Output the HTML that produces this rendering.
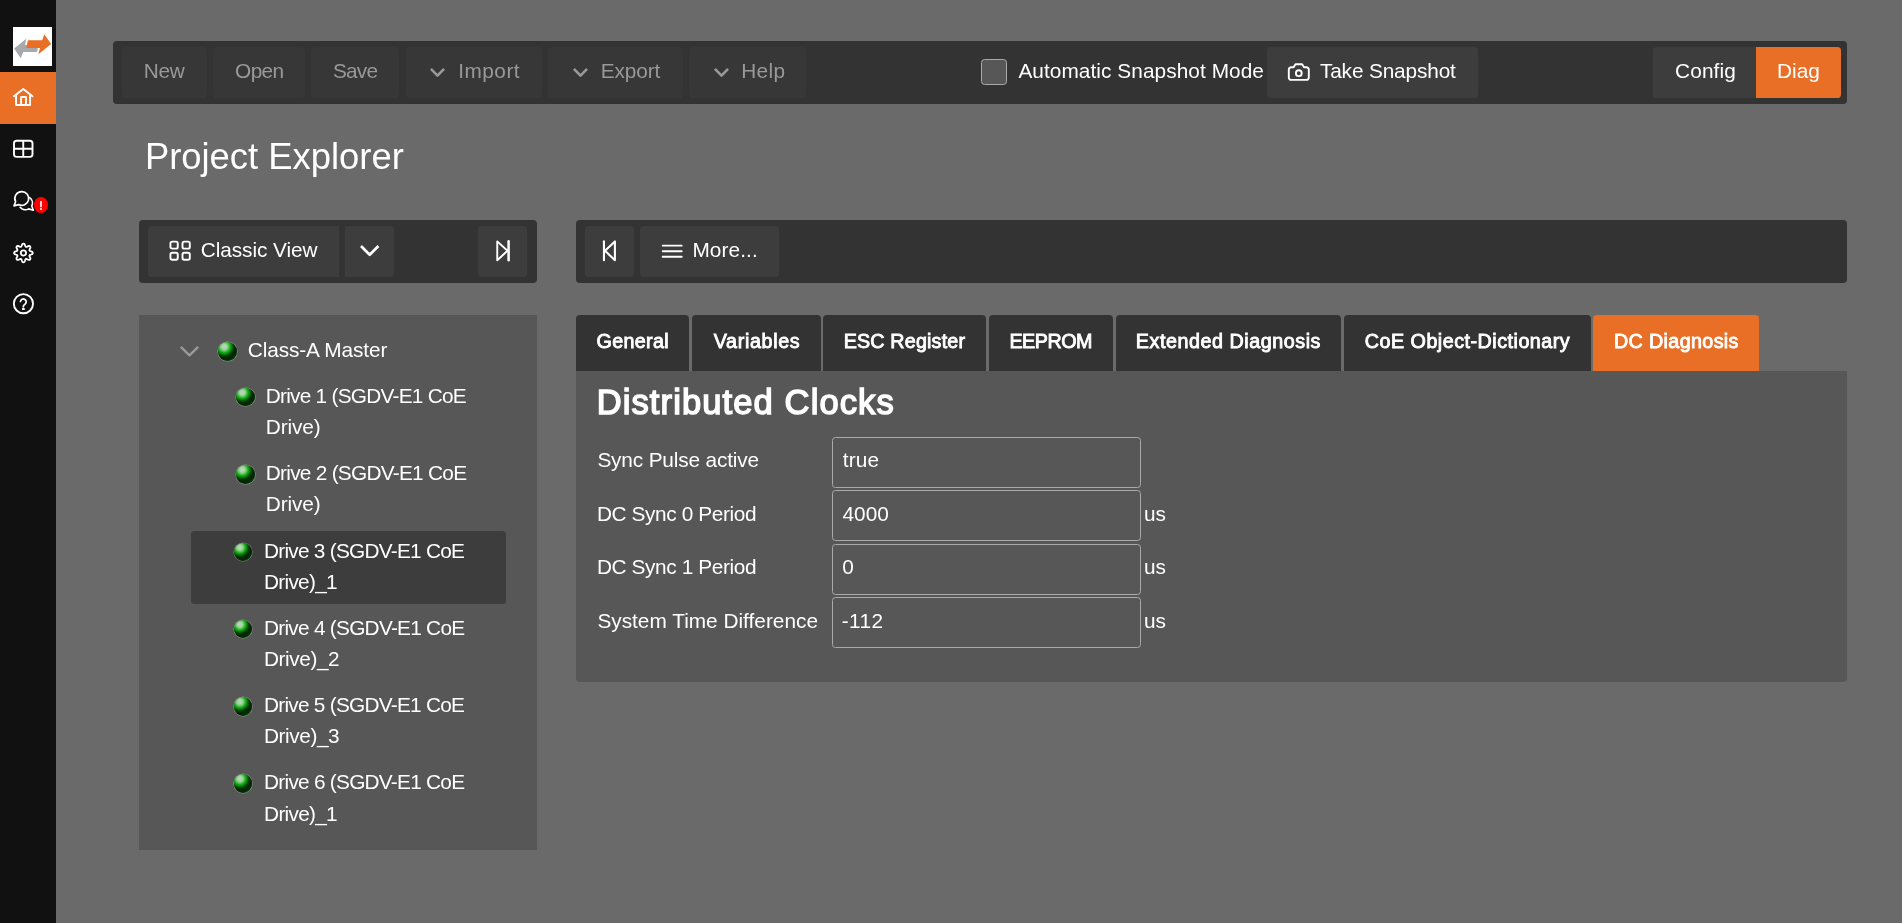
<!DOCTYPE html>
<html lang="en">
<head>
<meta charset="utf-8">
<title>Project Explorer</title>
<style>
*{box-sizing:border-box;margin:0;padding:0}
html,body{width:1902px;height:923px;overflow:hidden}
body{background:#6a6a6a;color:#fff;font-family:"Liberation Sans",sans-serif;font-size:20.8px;position:relative}
ul{list-style:none}
button{border:0;font:inherit;color:inherit;display:block;text-align:left;overflow:visible}
#app{position:absolute;left:0;top:0;width:1902px;height:923px;will-change:transform}
#side{position:absolute;left:0;top:0;width:56px;height:923px;background:#111}
#logo{position:absolute;left:13px;top:26.9px;width:39.2px;height:39.2px;background:#fff;display:block}
#logo svg{display:block}
.navi{position:absolute;left:0;width:56px;height:52px}
.navi.on{background:#e96f26}
#badge{position:absolute;width:14.3px;height:16.2px;border-radius:50%;background:#f00;color:#fff;font-size:12px;font-weight:700;line-height:18.4px;text-align:center}
.ico{position:absolute;overflow:visible}
.bar{position:absolute;background:#333;border-radius:3.8px}
#topbar{left:113px;top:41px;width:1734px;height:62.8px}
.btn{position:absolute;background:#3d3d3d;border-radius:3.6px}
.btn.dis{background:#373737}
.btn.on{background:#e96f26}
#chk{position:absolute;width:26px;height:26px;border:1px solid #aaa;border-radius:3.5px;background:#575757}
.t{position:absolute;white-space:pre;line-height:1;font-weight:400;font-style:normal}
#tree{position:absolute;left:139px;top:315px;width:398px;height:535px;background:#575757}
#sel{position:absolute;width:315.2px;height:73px;background:#3d3d3d;border-radius:3.5px}
.ball{position:absolute;width:18.5px;height:18.5px;border-radius:50%;background:radial-gradient(circle at 33% 25%,#b6dbb6 0%,#a6d5a6 13%,#62c262 23%,#18b018 30%,#0f940f 36%,#076607 43%,#033603 51%,#022702 59%,#022a02 70%,#064806 82%,#0a5a0a 100%);box-shadow:0 0 0 .55px rgba(215,232,215,.42)}
.tab{position:absolute;top:315px;height:56px;background:#333;border-radius:4px 4px 0 0}
.tab.on{background:#e96f26}
#panel{position:absolute;left:576px;top:370.6px;width:1271px;height:311.2px;background:#575757;border-radius:0 0 4px 4px}
.inp{position:absolute;left:256px;width:309px;height:51px;border:1px solid #aaa;border-radius:3.5px;display:block}
</style>
</head>
<body>
<div id="app">
<nav id="side" aria-label="Main navigation">
<a id="logo" aria-label="Home"><svg width="39.2" height="39.2" viewBox="0 0 39 39" aria-hidden="true"><path d="M1.1 21.5L13.2 11.6L12 18H25.5L23.9 24.8H10.2L7.7 31.2Z" fill="#a7a9ac"/><path d="M38 16.8L31.1 7.1L29.1 13.3H14.9L13.1 20.9L26.9 21L25.2 27Z" fill="#e96f26"/></svg></a>
<ul>
<li class="navi on" style="top:72px"><svg class="ico" style="left:12px;top:14px" width="23" height="22" viewBox="0 0 23 22" aria-hidden="true"><g fill="none" stroke="#fff" stroke-width="1.9" stroke-linejoin="round" stroke-linecap="round"><path d="M2 10.3L11.26 2.9L20.5 10.3"/><path d="M4.05 8.9V19H18.1V8.9"/><path d="M9.1 19V11H13.95V19"/></g></svg></li>
<li class="navi" style="top:124px"><svg class="ico" style="left:12px;top:14.3px" width="23" height="22" viewBox="0 0 23 22" aria-hidden="true"><g fill="none" stroke="#fff" stroke-width="1.9"><rect x="2" y="2.7" width="18.5" height="16.2" rx="2.6"/><path d="M2 10.8H20.5M11.25 2.7V18.9"/></g></svg></li>
<li class="navi" style="top:176px"><svg class="ico" style="left:12px;top:13px" width="24" height="24" viewBox="0 0 24 24" aria-hidden="true"><g fill="none" stroke="#fff" stroke-width="1.65" stroke-linejoin="round" stroke-linecap="round"><path d="M9.8 2.6a6.9 6.9 0 1 1 -3.2 13l-4.6 1.3 1.6 -4.2A6.9 6.9 0 0 1 9.8 2.6Z"/><path d="M17.6 8.6a6.600 6.600 0 0 1 2.2 8.3l1.5 4.3-4.600-1.3a6.900 6.900 0 0 1-8.600-1.600"/></g></svg><b id="badge" style="left:33.9px;top:20.9px">!</b></li>
<li class="navi" style="top:228px"><svg class="ico" style="left:12px;top:13px" width="24" height="24" viewBox="0 0 24 24" aria-hidden="true"><g fill="none" stroke="#fff" stroke-width="1.8" stroke-linejoin="round"><path d="M11.43 2.60L12.03 2.75L12.58 3.20L12.98 4.15L13.26 5.12L13.58 5.62L13.94 5.90L14.39 5.96L14.97 5.83L15.85 5.34L16.80 4.95L17.51 5.02L18.04 5.34L18.36 5.87L18.43 6.58L18.04 7.53L17.55 8.41L17.42 8.99L17.48 9.44L17.76 9.80L18.26 10.12L19.23 10.40L20.18 10.80L20.63 11.35L20.78 11.95L20.63 12.55L20.18 13.10L19.23 13.50L18.26 13.78L17.76 14.10L17.48 14.46L17.42 14.91L17.55 15.49L18.04 16.37L18.43 17.32L18.36 18.03L18.04 18.56L17.51 18.88L16.80 18.95L15.85 18.56L14.97 18.07L14.39 17.94L13.94 18.00L13.58 18.28L13.26 18.78L12.98 19.75L12.58 20.70L12.03 21.15L11.43 21.30L10.83 21.15L10.28 20.70L9.88 19.75L9.60 18.78L9.28 18.28L8.92 18.00L8.47 17.94L7.89 18.07L7.01 18.56L6.06 18.95L5.35 18.88L4.82 18.56L4.50 18.03L4.43 17.32L4.82 16.37L5.31 15.49L5.44 14.91L5.38 14.46L5.10 14.10L4.60 13.78L3.63 13.50L2.68 13.10L2.23 12.55L2.08 11.95L2.23 11.35L2.68 10.80L3.63 10.40L4.60 10.12L5.10 9.80L5.38 9.44L5.44 8.99L5.31 8.41L4.82 7.53L4.43 6.58L4.50 5.87L4.82 5.34L5.35 5.02L6.06 4.95L7.01 5.34L7.89 5.83L8.47 5.96L8.92 5.90L9.28 5.62L9.60 5.12L9.88 4.15L10.28 3.20L10.83 2.75Z"/><circle cx="11.43" cy="11.95" r="2.65"/></g></svg></li>
<li class="navi" style="top:280px"><svg class="ico" style="left:12px;top:12px" width="24" height="24" viewBox="0 0 24 24" aria-hidden="true"><g fill="none" stroke="#fff" stroke-linecap="round"><circle cx="11.43" cy="11.7" r="9.6" stroke-width="1.9"/><path d="M8.45 9.5A2.9 2.9 0 1 1 12.9 12.3C12 12.9 11.35 13.3 11.35 14.3V14.8" stroke-width="1.75"/></g><rect x="9.95" y="16.1" width="2.9" height="1.9" rx=".6" fill="#fff"/></svg></li>
</ul>
</nav>
<header class="bar" id="topbar">
<button type="button" class="btn dis" disabled style="left:8.8px;top:5.8px;width:85.2px;height:51.3px"><span class="t" style="left:22px;top:14.2px;color:#999;letter-spacing:-0.29px">New</span></button>
<button type="button" class="btn dis" disabled style="left:99.8px;top:5.8px;width:92.2px;height:51.3px"><span class="t" style="left:22.3px;top:14.2px;color:#999;letter-spacing:-0.63px">Open</span></button>
<button type="button" class="btn dis" disabled style="left:197.8px;top:5.8px;width:88px;height:51.3px"><span class="t" style="left:22.13px;top:14.2px;color:#999;letter-spacing:-0.79px">Save</span></button>
<button type="button" class="btn dis" disabled style="left:292.8px;top:5.8px;width:136.2px;height:51.3px"><svg class="ico" style="left:24.2px;top:20.9px" width="15" height="9.3" viewBox="0 0 15 9.3" aria-hidden="true"><path d="M0.93 0.9L7.5 7.69L14.07 0.9" fill="none" stroke="#999" stroke-width="2.6" stroke-linejoin="round"/></svg><span class="t" style="left:52.55px;top:14.2px;color:#999;letter-spacing:0.45px">Import</span></button>
<button type="button" class="btn dis" disabled style="left:435px;top:5.8px;width:135px;height:51.3px"><svg class="ico" style="left:24.5px;top:20.9px" width="15" height="9.3" viewBox="0 0 15 9.3" aria-hidden="true"><path d="M0.93 0.9L7.5 7.69L14.07 0.9" fill="none" stroke="#999" stroke-width="2.6" stroke-linejoin="round"/></svg><span class="t" style="left:52.85px;top:14.2px;color:#999;letter-spacing:-0.12px">Export</span></button>
<button type="button" class="btn dis" disabled style="left:575.8px;top:5.8px;width:117.4px;height:51.3px"><svg class="ico" style="left:25px;top:20.9px" width="15" height="9.3" viewBox="0 0 15 9.3" aria-hidden="true"><path d="M0.93 0.9L7.5 7.69L14.07 0.9" fill="none" stroke="#999" stroke-width="2.6" stroke-linejoin="round"/></svg><span class="t" style="left:52.35px;top:14.2px;color:#999;letter-spacing:0.35px">Help</span></button>
<label id="auto"><span id="chk" role="checkbox" aria-checked="false" style="left:868px;top:18px"></span><span class="t" style="left:905.42px;top:20px;letter-spacing:0.07px">Automatic Snapshot Mode</span></label>
<button type="button" class="btn" style="left:1154px;top:5.8px;width:211px;height:51.3px"><svg class="ico" style="left:19px;top:15.2px" width="26" height="21" viewBox="0 0 26 21" aria-hidden="true"><g fill="none" stroke="#fff" stroke-width="1.9" stroke-linejoin="round"><path d="M2.8 7.6a2.3 2.3 0 0 1 2.3-2.3h2.5l1.9-3h6.6l1.9 3h2.5a2.3 2.3 0 0 1 2.3 2.3v8a2.3 2.3 0 0 1-2.3 2.3H5.1a2.3 2.3 0 0 1-2.3-2.3Z"/><circle cx="12.8" cy="11.2" r="2.9"/></g></svg><span class="t" style="left:52.95px;top:14.2px;letter-spacing:-0.14px">Take Snapshot</span></button>
<button type="button" class="btn" style="left:1540px;top:5.8px;width:102.8px;height:51.3px;border-radius:3.6px 0 0 3.6px"><span class="t" style="left:22.1px;top:14.2px;letter-spacing:0.11px">Config</span></button>
<button type="button" class="btn on" style="left:1642.8px;top:5.8px;width:85.4px;height:51.3px;border-radius:0 3.6px 3.6px 0"><span class="t" style="left:21.15px;top:14.2px;letter-spacing:0.05px">Diag</span></button>
</header>
<h1 class="t" style="left:144.9px;top:139px;font-size:36.4px">Project Explorer</h1>
<div class="bar" role="toolbar" style="left:139.2px;top:220px;width:397.8px;height:62.8px">
<button type="button" class="btn" style="left:8.6px;top:6.2px;width:191.4px;height:50.8px;border-radius:3.6px 0 0 3.6px"><svg class="ico" style="left:20.2px;top:12.8px" width="24" height="23" viewBox="0 0 24 23" aria-hidden="true"><g fill="none" stroke="#fff" stroke-width="1.9"><rect x="2.45" y="2.65" width="7.3" height="7" rx="1.7"/><rect x="14.5" y="2.65" width="7.3" height="7" rx="1.7"/><rect x="2.45" y="13.75" width="7.3" height="7" rx="1.7"/><rect x="14.5" y="13.75" width="7.3" height="7" rx="1.7"/></g></svg><span class="t" style="left:53px;top:13.8px;letter-spacing:-0.07px">Classic View</span></button>
<button type="button" class="btn" aria-label="View options" style="left:205.8px;top:6.2px;width:48.8px;height:50.8px;border-radius:0 3.6px 3.6px 0"><svg class="ico" style="left:14.8px;top:19.1px" width="19.4" height="11.4" viewBox="0 0 19.4 11.4" aria-hidden="true"><path d="M0.96 0.95L9.7 9.73L18.44 0.95" fill="none" stroke="#fff" stroke-width="2.7" stroke-linejoin="round"/></svg></button>
<button type="button" class="btn" aria-label="Collapse" style="left:338.4px;top:6.2px;width:49.6px;height:50.8px"><svg class="ico" style="left:16.4px;top:12.8px" width="18" height="24" viewBox="0 0 18 24" aria-hidden="true"><g fill="none" stroke="#fff" stroke-width="1.9" stroke-linejoin="round" stroke-linecap="round"><path d="M3.25 2.4V21.2L13.5 11.8Z"/><path d="M14.6 2.2V21.2" stroke-width="2.5"/></g></svg></button>
</div>
<div class="bar" role="toolbar" style="left:576px;top:220px;width:1271px;height:62.8px">
<button type="button" class="btn" aria-label="Expand" style="left:8.7px;top:6.2px;width:49.4px;height:50.8px"><svg class="ico" style="left:15.9px;top:12.8px" width="18" height="24" viewBox="0 0 18 24" aria-hidden="true"><g fill="none" stroke="#fff" stroke-linejoin="round" stroke-linecap="round"><path d="M13.9 2.4V21.2L4 11.8Z" stroke-width="2.1"/><path d="M2.95 2.2V21.2" stroke-width="2.1"/></g></svg></button>
<button type="button" class="btn" style="left:64px;top:6.2px;width:139.2px;height:50.8px"><svg class="ico" style="left:20px;top:16.8px" width="25" height="16" viewBox="0 0 25 16" aria-hidden="true"><path d="M2.7 2.6H21.7M2.7 8.2H21.7M2.7 13.8H21.7" stroke="#fff" stroke-width="1.9" stroke-linecap="round"/></svg><span class="t" style="left:52.45px;top:13.8px;letter-spacing:0.1px">More...</span></button>
</div>
<aside id="tree" aria-label="Project tree"><ul role="tree">
<li role="treeitem" aria-expanded="true"><svg class="ico" style="left:41px;top:30.6px" width="19" height="10.8" viewBox="0 0 19 10.8" aria-hidden="true"><path d="M0.84 0.86L9.5 9.31L18.16 0.86" fill="none" stroke="#999" stroke-width="2.4" stroke-linejoin="round"/></svg><i class="ball" style="left:79.15px;top:27.05px"></i><span class="t" style="left:108.8px;top:25px;letter-spacing:-0.11px">Class-A Master</span>
<ul role="group">
<li role="treeitem"><i class="ball" style="left:97.05px;top:72.95px"></i><span class="lbl"><span class="t" style="left:126.75px;top:71px;letter-spacing:-0.74px">Drive 1 (SGDV-E1 CoE</span> <span class="t" style="left:126.75px;top:102px;letter-spacing:-0.11px">Drive)</span></span></li>
<li role="treeitem"><i class="ball" style="left:97.05px;top:150.35px"></i><span class="lbl"><span class="t" style="left:126.75px;top:148px;letter-spacing:-0.72px">Drive 2 (SGDV-E1 CoE</span> <span class="t" style="left:126.75px;top:179px;letter-spacing:-0.11px">Drive)</span></span></li>
<li role="treeitem" aria-selected="true" id="sel" style="left:51.8px;top:216px"><i class="ball" style="left:43.15px;top:11.55px"></i><span class="lbl"><span class="t" style="left:73.2px;top:10px;letter-spacing:-0.74px">Drive 3 (SGDV-E1 CoE</span> <span class="t" style="left:73.2px;top:41px;letter-spacing:-0.71px">Drive)_1</span></span></li>
<li role="treeitem"><i class="ball" style="left:94.95px;top:304.85px"></i><span class="lbl"><span class="t" style="left:125px;top:303px;letter-spacing:-0.73px">Drive 4 (SGDV-E1 CoE</span> <span class="t" style="left:125px;top:334px;letter-spacing:-0.43px">Drive)_2</span></span></li>
<li role="treeitem"><i class="ball" style="left:94.95px;top:382.15px"></i><span class="lbl"><span class="t" style="left:125px;top:380px;letter-spacing:-0.74px">Drive 5 (SGDV-E1 CoE</span> <span class="t" style="left:125px;top:411px;letter-spacing:-0.43px">Drive)_3</span></span></li>
<li role="treeitem"><i class="ball" style="left:94.95px;top:459.45px"></i><span class="lbl"><span class="t" style="left:125.1px;top:457px;letter-spacing:-0.74px">Drive 6 (SGDV-E1 CoE</span> <span class="t" style="left:125.1px;top:489px;letter-spacing:-0.73px">Drive)_1</span></span></li>
</ul></li></ul></aside>
<main>
<ul id="tabs" role="tablist">
<li class="tab" role="tab" aria-selected="false" style="left:575.8px;width:113px"><span class="t" style="left:20.68px;top:16.57px;font-size:19.72px;-webkit-text-stroke:0.86px #fff;letter-spacing:0.36px">General</span></li>
<li class="tab" role="tab" aria-selected="false" style="left:691.7px;width:129.1px"><span class="t" style="left:22px;top:16.57px;font-size:19.72px;-webkit-text-stroke:0.86px #fff;letter-spacing:0.67px">Variables</span></li>
<li class="tab" role="tab" aria-selected="false" style="left:823px;width:162.8px"><span class="t" style="left:20.66px;top:16.57px;font-size:19.72px;-webkit-text-stroke:0.86px #fff;letter-spacing:0.18px">ESC Register</span></li>
<li class="tab" role="tab" aria-selected="false" style="left:988.8px;width:124px"><span class="t" style="left:20.66px;top:16.57px;font-size:19.72px;-webkit-text-stroke:0.86px #fff;letter-spacing:-0.48px">EEPROM</span></li>
<li class="tab" role="tab" aria-selected="false" style="left:1116.2px;width:224.6px"><span class="t" style="left:19.66px;top:16.57px;font-size:19.72px;-webkit-text-stroke:0.86px #fff;letter-spacing:0.55px">Extended Diagnosis</span></li>
<li class="tab" role="tab" aria-selected="false" style="left:1344.2px;width:246.6px"><span class="t" style="left:20.58px;top:16.57px;font-size:19.72px;-webkit-text-stroke:0.86px #fff;letter-spacing:0.5px">CoE Object-Dictionary</span></li>
<li class="tab on" role="tab" aria-selected="true" style="left:1592.8px;width:166.2px"><span class="t" style="left:21.16px;top:16.57px;font-size:19.72px;-webkit-text-stroke:0.86px #fff;letter-spacing:0.37px">DC Diagnosis</span></li>
</ul>
<section id="panel" role="tabpanel">
<h2 class="t" style="left:20.68px;top:14.65px;font-size:34.51px;-webkit-text-stroke:1.5px #fff;letter-spacing:1.12px">Distributed Clocks</h2>
<form>
<p class="row"><label class="t" style="left:21.38px;top:79.4px;letter-spacing:-0.15px">Sync Pulse active</label><span class="inp" style="top:66.4px"><output><span class="t" style="left:9.77px;top:12px;letter-spacing:0.15px">true</span></output></span></p>
<p class="row"><label class="t" style="left:20.9px;top:133.4px;letter-spacing:-0.38px">DC Sync 0 Period</label><span class="inp" style="top:119.4px"><output><span class="t" style="left:9.45px;top:13px;letter-spacing:0.07px">4000</span></output></span><span class="t unit" style="left:567.89px;top:133.4px">us</span></p>
<p class="row"><label class="t" style="left:20.9px;top:186.4px;letter-spacing:-0.38px">DC Sync 1 Period</label><span class="inp" style="top:173.4px"><output><span class="t" style="left:9.15px;top:12px">0</span></output></span><span class="t unit" style="left:567.89px;top:186.4px">us</span></p>
<p class="row"><label class="t" style="left:21.38px;top:240.4px;letter-spacing:0.01px">System Time Difference</label><span class="inp" style="top:226.4px"><output><span class="t" style="left:8.83px;top:13px;letter-spacing:0.35px">-112</span></output></span><span class="t unit" style="left:567.89px;top:240.4px">us</span></p>
</form></section></main>
</div>
</body>
</html>
